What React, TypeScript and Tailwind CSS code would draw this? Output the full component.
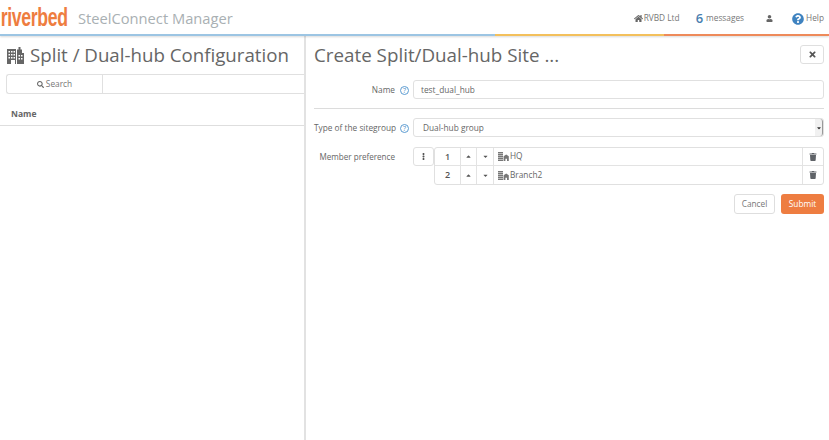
import { FaHome, FaUser, FaQuestionCircle, FaTrash, FaTimes, FaEllipsisV, FaCaretUp, FaCaretDown, FaSearch } from 'react-icons/fa'

function Hint() {
  return (
    <span className="flex h-[9px] w-[9px] shrink-0 items-center justify-center rounded-full border border-[#5b9bd1] text-[7px] leading-none text-[#4f8fc6]">
      ?
    </span>
  )
}

// tall block with a small house beside it, used for sites
function SiteIcon() {
  return (
    <svg width="11" height="9" viewBox="0 0 11 9" className="shrink-0" fill="#777">
      <path d="M0 0h5v1.4H0zM0 2h5v1.4H0zM0 4h5v1.4H0zM0 6h5v1.4H0zM0 8h5v1H0z" />
      <path d="M5.6 4.2 8.2 2.6l2.6 1.6V9H9V6.8H7.4V9H5.6z" />
    </svg>
  )
}

function ConfigIcon() {
  return (
    <svg width="19" height="19" viewBox="0 0 19 19" className="shrink-0" fill="#666">
      <path d="M1 3h9v15H1zM11 7V3.500h1.500V1h2v2.500H16V7h2v11h-7z" />
      <path
        fill="#fff"
        d="M2.500 5h1.500v1.500H2.500zM5 5h1.500v1.500H5zM7.500 5H9v1.500H7.500zM2.500 8h1.500v1.500H2.500zM5 8h1.500v1.500H5zM7.500 8H9v1.500H7.500zM2.500 11h1.500v1.500H2.500zM5 11h1.500v1.500H5zM7.500 11H9v1.500H7.500zM12.500 9h1.500v1.500h-1.500zM15 9h1.500v1.500H15zM12.500 12h1.500v1.500h-1.500zM15 12h1.500v1.500H15zM5 14h4v4H5z"
      />
    </svg>
  )
}

function MemberRow({ index, name, last }: { index: number; name: string; last?: boolean }) {
  return (
    <div className={`flex h-[18px] items-stretch ${last ? '' : 'border-b border-[#e3e3e3]'}`}>
      <div className="flex w-[26px] items-center justify-center border-r border-[#e3e3e3] text-[9px] font-semibold text-[#555]">
        {index}
      </div>
      <div className="flex w-[16px] items-center justify-center border-r border-[#e3e3e3] text-[7px] text-[#555]">
        <FaCaretUp />
      </div>
      <div className="flex w-[17px] items-center justify-center border-r border-[#e3e3e3] text-[7px] text-[#555]">
        <FaCaretDown />
      </div>
      <div className="flex flex-1 items-center gap-[1px] pl-[4px] text-[8.3px] text-[#666]">
        <SiteIcon />
        {name}
      </div>
      <div className="flex w-[21px] items-center justify-center border-l border-[#e3e3e3] text-[8px] text-[#5f6368]">
        <FaTrash />
      </div>
    </div>
  )
}

export default function App() {
  return (
    <div className="flex h-[440px] w-[829px] flex-col overflow-hidden bg-white font-['Open_Sans',sans-serif] text-[#666]">
      <header className="relative z-10 shrink-0 shadow-[0_1px_2px_rgba(0,0,0,0.15)]">
        <div className="flex h-[34px] items-center">
          <div className="w-[69px] origin-left scale-x-[0.68] whitespace-nowrap pl-[1px] font-['Liberation_Sans',sans-serif] text-[26px] font-bold leading-none tracking-[-0.5px] text-[#ee7d3f]">
            riverbed
          </div>
          <div className="ml-[9px] whitespace-nowrap pt-[3px] text-[14.7px] text-[#a9b0b3]">SteelConnect Manager</div>
          <div className="ml-auto flex items-center pr-[5px] pt-[3px] text-[8.3px] text-[#777]">
            <FaHome className="mr-[1px] text-[9px] text-[#666]" />
            <span>RVBD Ltd</span>
            <span className="ml-[16px] text-[13px] font-semibold leading-none text-[#4a7fb0]">6</span>
            <span className="ml-[3px]">messages</span>
            <FaUser className="ml-[22px] text-[7px] text-[#666]" />
            <FaQuestionCircle className="ml-[19px] text-[12px] text-[#3f83c0]" />
            <span className="ml-[2px]">Help</span>
          </div>
        </div>
        <div className="flex h-[2px]">
          <div className="w-[495px] bg-[#9cc5e3]" />
          <div className="w-[169px] bg-[#f3c05c]" />
          <div className="flex-1 bg-[#ee8a5a]" />
        </div>
      </header>

      <div className="flex min-h-0 flex-1">
        <section className="w-[304px] shrink-0">
          <h1 className="flex h-[38px] items-center gap-[5px] whitespace-nowrap pl-[6px] pt-[1px] text-[18.7px] text-[#666]">
            <ConfigIcon />
            Split / Dual-hub Configuration
          </h1>
          <div className="ml-[6px] flex h-[20px] rounded-l-[3px] border border-r-0 border-[#e0e0e0]">
            <div className="flex w-[96px] items-center justify-center gap-[2px] border-r border-[#e0e0e0] text-[8.3px] text-[#777]">
              <FaSearch className="text-[7px] text-[#666]" />
              Search
            </div>
          </div>
          <div className="mt-[12px] flex h-[20px] items-center border-b border-[#dedede] pb-[2px] pl-[11px] text-[8.5px] font-bold text-[#666]">
            Name
          </div>
        </section>

        <section className="flex-1 border-l-[2px] border-[#e2e2e2] pl-[8px] pr-[5px]">
          <div className="flex h-[44px] items-start justify-between">
            <h2 className="mt-[9px] whitespace-nowrap text-[18.8px] leading-[20px] text-[#666]">Create Split/Dual-hub Site ...</h2>
            <button className="mt-[9px] flex h-[19px] w-[24px] items-center justify-center rounded-[3px] border border-[#dfdfdf] text-[9px] text-[#555]">
              <FaTimes />
            </button>
          </div>

          <div className="flex h-[19px] items-center">
            <div className="flex w-[99px] items-center justify-end gap-[5px] pr-[4px] pt-[1px] text-[8.3px] text-[#666]">
              Name <Hint />
            </div>
            <div className="flex h-full flex-1 items-center rounded-[3px] border border-[#e0e0e0] pl-[7px] pt-[1px] text-[8.3px] text-[#666]">
              test_dual_hub
            </div>
          </div>

          <div className="my-[9px] h-px bg-[#dcdcdc]" />

          <div className="flex h-[19px] items-center">
            <div className="flex w-[99px] items-center justify-between whitespace-nowrap pr-[4px] pt-[1px] text-[8.3px] text-[#666]">
              Type of the sitegroup <Hint />
            </div>
            <div className="relative flex h-full flex-1 items-center rounded-[3px] border border-[#e0e0e0] pl-[9px] pt-[1px] text-[8.3px] text-[#666]">
              Dual-hub group
              <div className="absolute right-0 top-0 flex h-full w-[8px] items-center justify-center rounded-r-[3px] border-r border-[#999] bg-[#f1f1f1] text-[6px] text-[#333]">
                <FaCaretDown />
              </div>
            </div>
          </div>

          <div className="mt-[10px] flex items-start">
            <div className="flex h-[19px] w-[81px] shrink-0 items-center justify-end whitespace-nowrap pt-[1px] text-[8.1px] text-[#666]">
              Member preference
            </div>
            <button className="ml-[18px] flex h-[19px] w-[21px] shrink-0 items-center justify-center rounded-[3px] border border-[#e0e0e0] text-[7px] text-[#555]">
              <FaEllipsisV />
            </button>
            <div className="flex-1 rounded-[3px] border border-[#e0e0e0]">
              <MemberRow index={1} name="HQ" />
              <MemberRow index={2} name="Branch2" last />
            </div>
          </div>

          <div className="mt-[9px] flex justify-end gap-[6px]">
            <button className="h-[20px] w-[41px] rounded-[3px] border border-[#dedede] text-[8.3px] text-[#777]">
              Cancel
            </button>
            <button className="h-[20px] w-[43px] rounded-[3px] bg-[#ee7d41] text-[8.3px] text-white">
              Submit
            </button>
          </div>
        </section>
      </div>
    </div>
  )
}
